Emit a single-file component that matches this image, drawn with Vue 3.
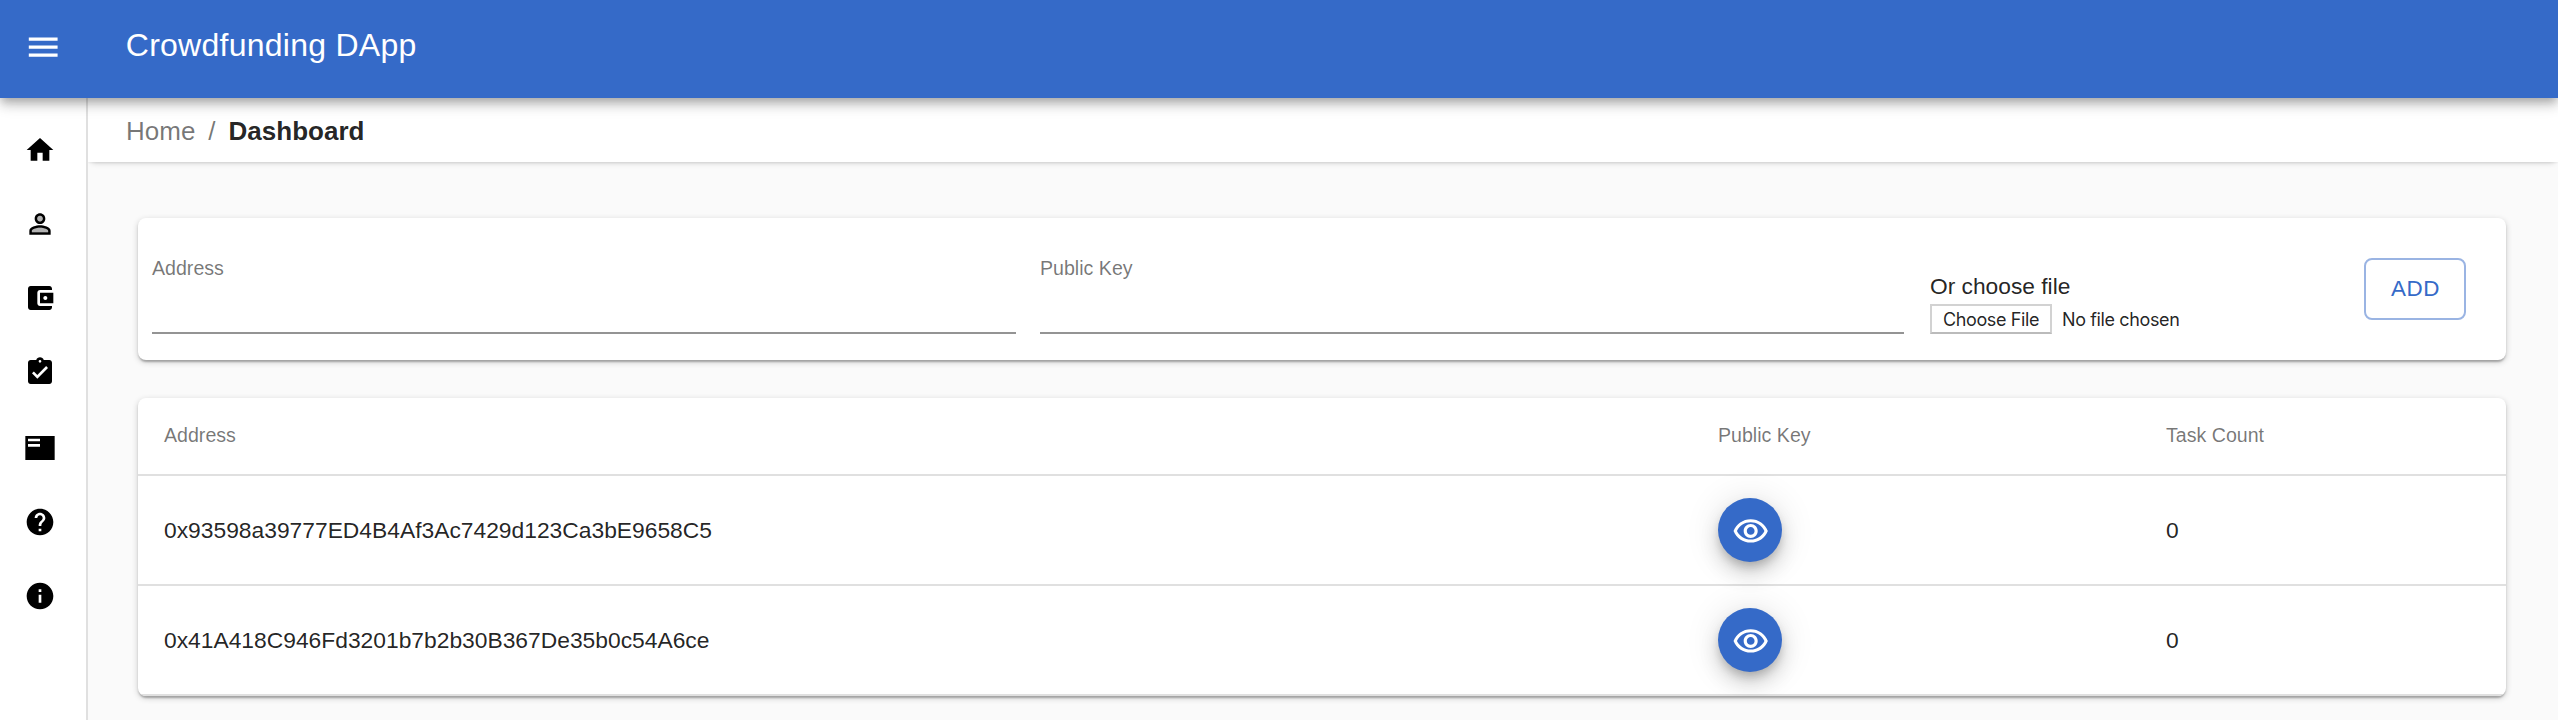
<script setup>
const navItems = [
  { name: 'home', d: 'M10 20v-6h4v6h5v-8h3L12 3 2 12h3v8z' },
  {
    name: 'profile',
    tone: 'M12 5.9a2.1 2.1 0 1 0 0 4.2 2.1 2.1 0 0 0 0-4.2zM12 14.9c-2.97 0-6.1 1.46-6.1 2.1v1.1h12.2V17c0-.64-3.13-2.1-6.1-2.1z',
    d: 'M12 13c-2.67 0-8 1.34-8 4v3h16v-3c0-2.66-5.33-4-8-4zm6.1 5.1H5.9V17c0-.64 3.13-2.1 6.1-2.1s6.1 1.46 6.1 2.1v1.1zM12 4C9.79 4 8 5.79 8 8s1.79 4 4 4 4-1.79 4-4-1.79-4-4-4zm0 6.1c-1.16 0-2.1-.94-2.1-2.1s.94-2.1 2.1-2.1 2.1.94 2.1 2.1-.94 2.1-2.1 2.1z',
  },
  {
    name: 'wallet',
    d: 'M21 18v1c0 1.1-.9 2-2 2H5c-1.11 0-2-.9-2-2V5c0-1.1.89-2 2-2h14c1.1 0 2 .9 2 2v1h-9c-1.11 0-2 .9-2 2v8c0 1.1.89 2 2 2h9zm-9-2h10V8H12v8zm4-2.5c-.83 0-1.5-.67-1.5-1.5s.67-1.5 1.5-1.5 1.5.67 1.5 1.5-.67 1.5-1.5 1.5z',
  },
  {
    name: 'tasks',
    d: 'M19 3h-4.18C14.4 1.84 13.3 1 12 1c-1.3 0-2.4.84-2.82 2H5c-1.1 0-2 .9-2 2v14c0 1.1.9 2 2 2h14c1.1 0 2-.9 2-2V5c0-1.1-.9-2-2-2zm-7 0c.55 0 1 .45 1 1s-.45 1-1 1-1-.45-1-1 .45-1 1-1zm-2 14l-4-4 1.41-1.41L10 14.17l6.59-6.59L18 9l-8 8z',
  },
  { name: 'list', d: 'M23 3H1v18h22V3zM12 11H3V9h9v2zm0-4H3V5h9v2z' },
  {
    name: 'help',
    d: 'M12 2C6.48 2 2 6.48 2 12s4.48 10 10 10 10-4.48 10-10S17.52 2 12 2zm1 17h-2v-2h2v2zm2.07-7.75l-.9.92C13.45 12.9 13 13.5 13 15h-2v-.5c0-1.1.45-2.1 1.17-2.83l1.24-1.26c.37-.36.59-.86.59-1.41 0-1.1-.9-2-2-2s-2 .9-2 2H8c0-2.21 1.79-4 4-4s4 1.79 4 4c0 .88-.36 1.68-.93 2.25z',
  },
  { name: 'info', d: 'M12 2C6.48 2 2 6.48 2 12s4.48 10 10 10 10-4.48 10-10S17.52 2 12 2zm1 15h-2v-6h2v6zm0-8h-2V7h2v2z' },
]

const eye =
  'M12 6c3.79 0 7.17 2.13 8.82 5.5C19.17 14.87 15.79 17 12 17s-7.17-2.13-8.82-5.5C4.83 8.13 8.21 6 12 6m0-2C7 4 2.73 7.11 1 11.5 2.73 15.89 7 19 12 19s9.27-3.11 11-7.5C21.27 7.11 17 4 12 4zm0 5c1.38 0 2.5 1.12 2.5 2.5S13.38 14 12 14s-2.5-1.12-2.5-2.5S10.62 9 12 9m0-2c-2.48 0-4.5 2.02-4.5 4.5S9.52 16 12 16s4.5-2.02 4.5-4.5S14.48 7 12 7z'

const rows = [
  { address: '0x93598a39777ED4B4Af3Ac7429d123Ca3bE9658C5', tasks: 0 },
  { address: '0x41A418C946Fd3201b7b2b30B367De35b0c54A6ce', tasks: 0 },
]
</script>

<template>
  <div class="app">
    <header class="bar">
      <svg class="menu" viewBox="0 0 24 24"><path d="M3 18h18v-2H3v2zm0-5h18v-2H3v2zm0-7v2h18V6H3z" /></svg>
      <h1 class="title">Crowdfunding DApp</h1>
    </header>

    <div class="body">
      <nav class="drawer">
        <svg v-for="item in navItems" :key="item.name" :class="['nav-icon', item.name]" viewBox="0 0 24 24">
          <path v-if="item.tone" :d="item.tone" opacity=".3" />
          <path :d="item.d" />
        </svg>
      </nav>

      <main class="main">
        <div class="crumbs">
          <span class="muted">Home</span>
          <span class="muted slash">/</span>
          <strong>Dashboard</strong>
        </div>

        <section class="card form">
          <label class="field"><span>Address</span><input type="text" /></label>
          <label class="field"><span>Public Key</span><input type="text" /></label>
          <div class="file">
            <div class="file-title">Or choose file</div>
            <div class="file-row">
              <button class="file-btn">Choose File</button>
              <span class="file-name">No file chosen</span>
            </div>
          </div>
          <button class="add">ADD</button>
        </section>

        <section class="card table">
          <div class="row head">
            <span>Address</span><span>Public Key</span><span>Task Count</span>
          </div>
          <div v-for="row in rows" :key="row.address" class="row">
            <span>{{ row.address }}</span>
            <span class="key">
              <button class="fab"><svg viewBox="0 0 24 24"><path :d="eye" /></svg></button>
            </span>
            <span>{{ row.tasks }}</span>
          </div>
        </section>
      </main>
    </div>
  </div>
</template>

<style>
body {
  margin: 0;
  background: #fafafa;
}
</style>

<style scoped>
.app {
  height: 720px;
  overflow: hidden;
  display: flex;
  flex-direction: column;
  background: #fafafa;
  color: rgba(0, 0, 0, 0.87);
  font-family: 'Liberation Sans', Arial, sans-serif;
}
.app * {
  box-sizing: border-box;
}
.bar {
  flex: none;
  position: relative;
  z-index: 3;
  height: 98px;
  display: flex;
  align-items: center;
  padding: 0 0 8px 24px;
  background: #356ac8;
  color: #fff;
  box-shadow: 0 4px 8px -2px rgba(0, 0, 0, 0.2), 0 8px 10px rgba(0, 0, 0, 0.14), 0 2px 20px rgba(0, 0, 0, 0.12);
}
.menu {
  width: 38.4px;
  height: 38.4px;
  margin: 4px 63.4px 0 0;
  fill: currentColor;
}
.title {
  margin: 0;
  font-size: 32px;
  font-weight: 400;
  letter-spacing: 0.26px;
  line-height: 40px;
}
.body {
  flex: 1;
  display: flex;
  min-height: 0;
}
.drawer {
  flex: none;
  position: relative;
  z-index: 2;
  width: 88px;
  border-right: 2px solid #e0e0e0;
  background: #fff;
  padding: 36px 0 0 24px;
  display: flex;
  flex-direction: column;
  gap: 42px;
}
.nav-icon {
  flex: none;
  width: 32px;
  height: 32px;
  fill: #000;
}
.nav-icon.list {
  margin-top: 2px;
}
.main {
  flex: 1;
  min-width: 0;
}
.crumbs {
  height: 64px;
  display: flex;
  align-items: center;
  padding: 2px 0 0 38px;
  background: #fff;
  font-size: 26px;
  line-height: 32px;
  box-shadow: 0 4px 6px -4px rgba(0, 0, 0, 0.24), 0 1px 2px rgba(0, 0, 0, 0.05);
}
.muted {
  color: rgba(0, 0, 0, 0.54);
}
.slash {
  margin: 0 13px;
}
.card {
  margin: 0 52px 0 50px;
  background: #fff;
  border-radius: 8px;
  box-shadow: 0 2px 6px rgba(0, 0, 0, 0.2), 0 2px 2px rgba(0, 0, 0, 0.14), 0 4px 2px -2px rgba(0, 0, 0, 0.12);
}
.form {
  height: 142px;
  margin-top: 56px;
  padding: 0 40px 0 14px;
  display: flex;
}
.field {
  width: 864px;
  height: 116px;
  margin-right: 24px;
  padding-top: 38px;
  display: flex;
  flex-direction: column;
  justify-content: space-between;
  border-bottom: 2px solid #949494;
  color: rgba(0, 0, 0, 0.54);
  font-size: 19.6px;
  line-height: 24px;
}
.field input {
  border: 0;
  outline: 0;
  padding: 0;
  height: 38px;
  background: none;
}
.file {
  margin: 54px 0 0 2px;
  font-size: 22.75px;
  line-height: 28px;
}
.file-row {
  display: flex;
  align-items: center;
  margin-top: 4px;
  font: 18px/26px Inter, sans-serif;
  letter-spacing: -0.38px;
}
.file-btn {
  width: 122px;
  height: 30px;
  padding: 1px 0 0;
  border: 2px solid #d2d2d2;
  border-bottom-color: #bbb;
  background: #fff;
  color: inherit;
  font: inherit;
  letter-spacing: inherit;
}
.file-name {
  margin-left: 10px;
  padding-top: 1px;
}
.add {
  width: 102px;
  height: 62px;
  margin: 40px 0 0 auto;
  padding: 0 0 1px 1px;
  border: 2px solid #9ab4e3;
  border-radius: 8px;
  background: #fff;
  color: #356ac8;
  font: 22.4px 'Liberation Sans', Arial, sans-serif;
  letter-spacing: 0.6px;
}
.table {
  margin-top: 38px;
  overflow: hidden;
}
.row {
  height: 110px;
  display: grid;
  grid-template-columns: 1554px 448px 1fr;
  align-items: center;
  padding-left: 26px;
  border-bottom: 2px solid #e0e0e0;
  font-size: 22.82px;
}
.head {
  height: 78px;
  padding-bottom: 1px;
  color: rgba(0, 0, 0, 0.54);
  font-size: 19.6px;
}
.fab {
  width: 64px;
  height: 64px;
  display: flex;
  align-items: center;
  justify-content: center;
  padding: 3px 0 0 2px;
  border: 0;
  border-radius: 50%;
  background: #356ac8;
  box-shadow: 0 6px 10px -2px rgba(0, 0, 0, 0.2), 0 12px 20px rgba(0, 0, 0, 0.14), 0 2px 36px rgba(0, 0, 0, 0.12);
}
.fab svg {
  width: 37.4px;
  height: 37.4px;
  fill: #fff;
}
</style>
